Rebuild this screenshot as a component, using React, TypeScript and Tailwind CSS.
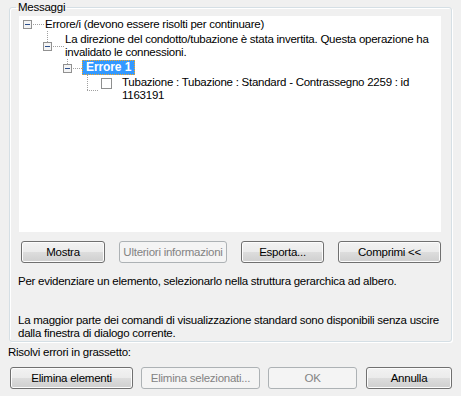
import React from 'react';

const BTN =
  'h-[22px] rounded-[3px] border border-[#707070] bg-[linear-gradient(#f2f2f2,#ebebeb_50%,#dddddd_50%,#cfcfcf)] shadow-[inset_0_0_0_1px_#fcfcfc] text-black flex items-center justify-center';
const BTN_OFF =
  'h-[22px] rounded-[3px] border border-[#adb2b5] bg-[#f4f4f4] text-[#838383] flex items-center justify-center';

// expand/collapse box of the tree
const MinusBox = ({ x, y }: { x: number; y: number }) => (
  <g>
    <rect x={x + 0.5} y={y + 0.5} width={8} height={8} fill="#f4f4f4" stroke="#919191" />
    <line x1={x + 2} y1={y + 4.5} x2={x + 7} y2={y + 4.5} stroke="#2c4f8c" />
  </g>
);

export default function App() {
  return (
    <div className="w-[461px] h-[396px] bg-[#f0f0f0] text-black text-[11.5px] tracking-[-0.25px] leading-[13px] whitespace-nowrap font-['Liberation_Sans',Arial,sans-serif] overflow-hidden">
      <fieldset className="ml-[9px] w-[443px] min-w-0 border border-[#d5dfe5] rounded-[3px] shadow-[1px_1px_0_#ffffff,inset_1px_1px_0_#ffffff] pl-[9px] pr-[10px] pb-[1px]">
        <legend className="ml-[-3px] px-[2px] leading-[15px]">Messaggi</legend>

        {/* TREE */}
        <div className="mt-[1px] h-[216px] w-[422px] bg-white pt-[2px]">
          <div className="flex">
            <svg width={26} height={13} className="shrink-0 overflow-visible">
              <MinusBox x={4} y={2} />
              <line x1={14} y1={6.5} x2={26} y2={6.5} stroke="#a0a0a0" strokeDasharray="1 1" />
            </svg>
            <span>Errore/i (devono essere risolti per continuare)</span>
          </div>

          <div className="flex pl-[20px] pt-[2px]">
            <svg width={26} height={26} className="shrink-0 overflow-visible">
              <line x1={8.5} y1={-2} x2={8.5} y2={9} stroke="#a0a0a0" strokeDasharray="1 1" />
              <MinusBox x={4} y={9} />
              <line x1={14} y1={13.5} x2={26} y2={13.5} stroke="#a0a0a0" strokeDasharray="1 1" />
            </svg>
            <span>
              La direzione del condotto/tubazione è stata invertita. Questa operazione ha
              <br />
              invalidato le connessioni.
            </span>
          </div>

          <div className="flex pl-[40px] mt-[1px]">
            <svg width={23} height={15} className="shrink-0 overflow-visible">
              <line x1={8.5} y1={-1} x2={8.5} y2={4} stroke="#a0a0a0" strokeDasharray="1 1" />
              <MinusBox x={4} y={4} />
              <line x1={14} y1={8.5} x2={23} y2={8.5} stroke="#a0a0a0" strokeDasharray="1 1" />
            </svg>
            <span className="h-[15px] leading-[13px] px-[3px] bg-[#3399ff] text-white font-bold text-[12px] tracking-[-0.1px] border border-dotted border-[#f5a623]">
              Errore 1
            </span>
          </div>

          <div className="flex pl-[60px] pt-[1px]">
            <svg width={22} height={26} className="shrink-0 overflow-visible">
              <line x1={8.5} y1={-1} x2={8.5} y2={14.5} stroke="#a0a0a0" strokeDasharray="1 1" />
              <line x1={8} y1={14.5} x2={20} y2={14.5} stroke="#a0a0a0" strokeDasharray="1 1" />
            </svg>
            <span className="mt-[2px] w-[11px] h-[11px] shrink-0 border border-[#8e8f8f] bg-white" />
            <span className="ml-[10px]">
              Tubazione : Tubazione : Standard - Contrassegno 2259 : id
              <br />
              1163191
            </span>
          </div>
        </div>

        {/* TREE BUTTONS */}
        <div className="flex gap-[14px] mt-[9px] ml-[2px]">
          <button className={`${BTN} w-[84px]`}>Mostra</button>
          <button className={`${BTN_OFF} w-[108px]`}>Ulteriori informazioni</button>
          <button className={`${BTN} w-[83px]`}>Esporta...</button>
          <button className={`${BTN} w-[103px]`}>Comprimi &lt;&lt;</button>
        </div>

        <p className="mt-[12px] ml-[-1px]">Per evidenziare un elemento, selezionarlo nella struttura gerarchica ad albero.</p>
        <p className="mt-[26px] ml-[-1px]">
          La maggior parte dei comandi di visualizzazione standard sono disponibili senza uscire
          <br />
          dalla finestra di dialogo corrente.
        </p>
      </fieldset>

      <p className="mt-[4px] ml-[8px]">Risolvi errori in grassetto:</p>
      <div className="flex mt-[8px] ml-[10px]">
        <button className={`${BTN} w-[123px]`}>Elimina elementi</button>
        <button className={`${BTN_OFF} w-[119px] ml-[8px]`}>Elimina selezionati...</button>
        <button className={`${BTN_OFF} w-[89px] ml-[8px]`}>OK</button>
        <button className={`${BTN} w-[86px] ml-[9px]`}>Annulla</button>
      </div>
    </div>
  );
}
